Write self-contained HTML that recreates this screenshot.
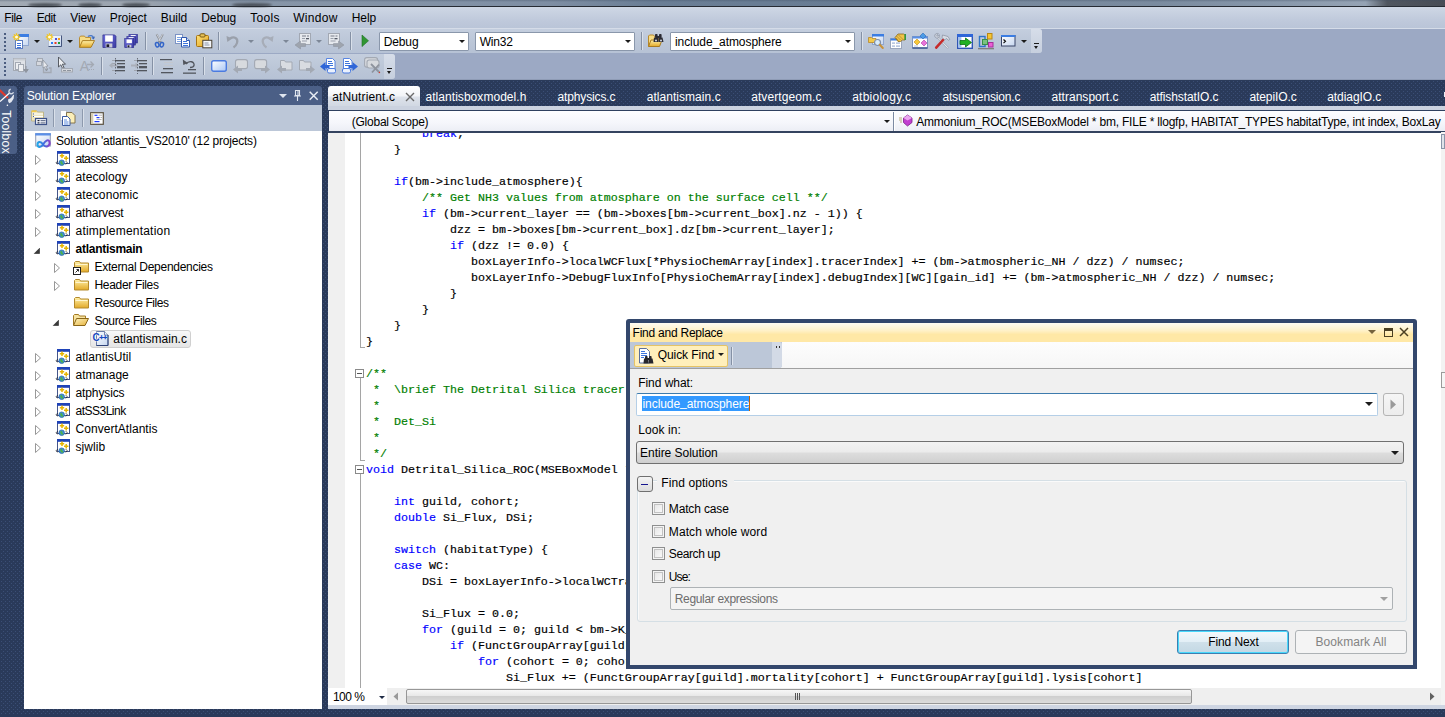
<!DOCTYPE html>
<html lang="en"><head><meta charset="utf-8"><title>atlantis_VS2010 - Microsoft Visual Studio</title>
<style>
html,body{margin:0;padding:0;}
body{width:1445px;height:717px;overflow:hidden;background:#2e3f61;font-family:"Liberation Sans",sans-serif;font-size:12px;color:#000;}
#root{position:relative;width:1445px;height:717px;overflow:hidden;
 background-color:#2a3a5a;
 background-image:radial-gradient(circle at 1.5px 1.5px,#3b4e75 0.55px,rgba(59,78,117,0) 0.85px),radial-gradient(circle at 3.5px 3.5px,#3b4e75 0.55px,rgba(59,78,117,0) 0.85px);
 background-size:4px 4px,4px 4px;background-position:0 0,0 0;}
.t{position:absolute;white-space:pre;line-height:16px;height:16px;}
.abs{position:absolute;}
.code{position:absolute;white-space:pre;font-family:"Liberation Mono",monospace;font-size:11.665px;line-height:16px;height:16px;color:#000;-webkit-text-stroke:0.18px;}
.kw{color:#0000ff;}
.cm{color:#008000;}
svg{position:absolute;overflow:visible;}
.sep{position:absolute;width:1px;background:#8591a5;box-shadow:1px 0 0 #d9e0ea;}
.combo{position:absolute;background:#fff;border:1px solid #8a97ab;box-sizing:border-box;border-radius:1px;}
.arr{position:absolute;width:0;height:0;border-left:3px solid transparent;border-right:3px solid transparent;border-top:3px solid #1b1b1b;}

</style></head>
<body>
<div id="root">
<div class="" style="position:absolute;left:0px;top:0px;width:1445px;height:9px;background:#cdd6e4;"></div>
<div class="" style="position:absolute;left:0px;top:0px;width:1445px;height:7px;background:linear-gradient(90deg,#a2aab4 0,#9aa3ae 10%,#8896a8 14%,#8292a6 30%,#7e8ea3 38%,#6a7e95 45%,#687c93 60%,#76889c 65%,#7a8b9f 80%,#8797aa 88%,#95a3b4 94.5%,#50565f 96%,#474c55 100%);"></div>
<div class="" style="position:absolute;left:0px;top:0px;width:1445px;height:2px;background:linear-gradient(rgba(60,75,95,.35),rgba(60,75,95,0));"></div>
<div class="" style="position:absolute;left:28px;top:2.5px;width:34px;height:4px;background:#41474f;border-radius:50%;filter:blur(1.2px);opacity:.85;"></div>
<div class="" style="position:absolute;left:78px;top:2.5px;width:24px;height:4px;background:#41474f;border-radius:50%;filter:blur(1.2px);opacity:.85;"></div>
<div class="" style="position:absolute;left:122px;top:2.5px;width:28px;height:4px;background:#41474f;border-radius:50%;filter:blur(1.2px);opacity:.85;"></div>
<div class="" style="position:absolute;left:232px;top:2.5px;width:40px;height:4px;background:#41474f;border-radius:50%;filter:blur(1.2px);opacity:.85;"></div>
<div class="" style="position:absolute;left:0px;top:6.3px;width:1445px;height:1.2px;background:#262b33;"></div>
<div class="" style="position:absolute;left:0px;top:7.5px;width:1445px;height:0.8px;background:#d4dbe6;"></div>
<div class="" style="position:absolute;left:0px;top:8px;width:1445px;height:21px;background:linear-gradient(#cdd6e4,#bfc9db 60%,#b9c4d7);"></div>
<span class="t " style="left:4.2px;top:10.0px;letter-spacing:-0.334px;">File</span>
<span class="t " style="left:36.7px;top:10.0px;letter-spacing:-0.419px;">Edit</span>
<span class="t " style="left:70.2px;top:10.0px;letter-spacing:-0.073px;">View</span>
<span class="t " style="left:109.7px;top:10.0px;letter-spacing:-0.050px;">Project</span>
<span class="t " style="left:160.7px;top:10.0px;letter-spacing:-0.037px;">Build</span>
<span class="t " style="left:201.2px;top:10.0px;letter-spacing:-0.072px;">Debug</span>
<span class="t " style="left:250.2px;top:10.0px;letter-spacing:0.297px;">Tools</span>
<span class="t " style="left:293.2px;top:10.0px;letter-spacing:0.303px;">Window</span>
<span class="t " style="left:351.7px;top:10.0px;letter-spacing:-0.045px;">Help</span>
<div class="" style="position:absolute;left:0px;top:29px;width:1445px;height:51px;background:#9ca9c4;"></div>
<div class="" style="position:absolute;left:0px;top:28px;width:1445px;height:1px;background:#d5dce8;"></div>
<div class="" style="position:absolute;left:0px;top:29px;width:1042px;height:24px;background:linear-gradient(#c4cede,#bcc7d8 50%,#b6c2d5);border-radius:0 3px 3px 0;"></div>
<div class="" style="position:absolute;left:1031px;top:29px;width:11px;height:24px;background:linear-gradient(#d6dde9,#c6cfde);border-radius:0 3px 3px 0;"></div>
<div class="" style="position:absolute;left:0px;top:54px;width:395px;height:25px;background:linear-gradient(#c4cede,#bcc7d8 50%,#b6c2d5);border-radius:0 3px 3px 0;"></div>
<div class="" style="position:absolute;left:384px;top:54px;width:11px;height:25px;background:linear-gradient(#d6dde9,#c6cfde);border-radius:0 3px 3px 0;"></div>
<div class="" style="position:absolute;left:0px;top:79px;width:1445px;height:1px;background:#8e9bb5;"></div>
<div class="" style="position:absolute;left:4px;top:33px;width:2px;height:2px;background:#4b5d7f;"></div>
<div class="" style="position:absolute;left:4px;top:37px;width:2px;height:2px;background:#4b5d7f;"></div>
<div class="" style="position:absolute;left:4px;top:41px;width:2px;height:2px;background:#4b5d7f;"></div>
<div class="" style="position:absolute;left:4px;top:45px;width:2px;height:2px;background:#4b5d7f;"></div>
<div class="" style="position:absolute;left:4px;top:49px;width:2px;height:2px;background:#4b5d7f;"></div>
<div class="" style="position:absolute;left:4px;top:58px;width:2px;height:2px;background:#4b5d7f;"></div>
<div class="" style="position:absolute;left:4px;top:62px;width:2px;height:2px;background:#4b5d7f;"></div>
<div class="" style="position:absolute;left:4px;top:66px;width:2px;height:2px;background:#4b5d7f;"></div>
<div class="" style="position:absolute;left:4px;top:70px;width:2px;height:2px;background:#4b5d7f;"></div>
<div class="" style="position:absolute;left:4px;top:74px;width:2px;height:2px;background:#4b5d7f;"></div>
<div class="sep" style="left:145px;top:32px;height:18px"></div>
<div class="sep" style="left:218px;top:32px;height:18px"></div>
<div class="sep" style="left:350px;top:32px;height:18px"></div>
<div class="sep" style="left:641px;top:32px;height:18px"></div>
<div class="sep" style="left:861px;top:32px;height:18px"></div>
<div class="sep" style="left:101px;top:57px;height:18px"></div>
<div class="sep" style="left:152px;top:57px;height:18px"></div>
<div class="sep" style="left:203px;top:57px;height:18px"></div>
<div class="arr" style="left:34px;top:39.5px;border-top-color:#1b1b1b"></div>
<div class="arr" style="left:67px;top:39.5px;border-top-color:#1b1b1b"></div>
<div class="arr" style="left:248px;top:39.5px;border-top-color:#7d8797"></div>
<div class="arr" style="left:283px;top:39.5px;border-top-color:#7d8797"></div>
<div class="arr" style="left:316px;top:39.5px;border-top-color:#7d8797"></div>
<div class="arr" style="left:1021px;top:39.5px;border-top-color:#1b1b1b"></div>
<div class="" style="position:absolute;left:1034px;top:43px;width:5px;height:1px;background:#1b1b1b;"></div>
<div class="arr" style="left:1034px;top:46px;border-width:3px 2.5px 0 2.5px"></div>
<div class="" style="position:absolute;left:387px;top:68px;width:5px;height:1px;background:#1b1b1b;"></div>
<div class="arr" style="left:387px;top:71px;border-width:3px 2.5px 0 2.5px"></div>
<div class="combo" style="left:379px;top:31.5px;width:90px;height:19px"></div>
<div class="combo" style="left:475px;top:31.5px;width:160px;height:19px"></div>
<div class="combo" style="left:670px;top:31.5px;width:185px;height:19px"></div>
<span class="t " style="left:383.8px;top:34.0px;letter-spacing:-0.152px;">Debug</span>
<span class="t " style="left:479.7px;top:34.0px;letter-spacing:-0.223px;">Win32</span>
<span class="t " style="left:675.0px;top:34.0px;letter-spacing:-0.076px;">include_atmosphere</span>
<div class="arr" style="left:459px;top:40px"></div>
<div class="arr" style="left:625px;top:40px"></div>
<div class="arr" style="left:845px;top:40px"></div>
<svg width="0" height="0" style="left:0;top:0"><defs>
<linearGradient id="gFold" x1="0" y1="0" x2="0" y2="1"><stop offset="0" stop-color="#fff0a8"/><stop offset="1" stop-color="#e2a928"/></linearGradient>
<linearGradient id="gFold2" x1="0" y1="0" x2="1" y2="1"><stop offset="0" stop-color="#fdf3c0"/><stop offset="1" stop-color="#e6b13a"/></linearGradient>
<linearGradient id="gWin" x1="0" y1="0" x2="1" y2="1"><stop offset="0" stop-color="#ffffff"/><stop offset="1" stop-color="#c5d6f0"/></linearGradient>
<linearGradient id="gGray" x1="0" y1="0" x2="0" y2="1"><stop offset="0" stop-color="#d8dce3"/><stop offset="1" stop-color="#aeb4be"/></linearGradient>
<linearGradient id="gBlue" x1="0" y1="0" x2="1" y2="1"><stop offset="0" stop-color="#ffffff"/><stop offset="1" stop-color="#a9c6f5"/></linearGradient>
<linearGradient id="gFlop" x1="0" y1="0" x2="1" y2="1"><stop offset="0" stop-color="#6d6ddc"/><stop offset="1" stop-color="#3c3ca4"/></linearGradient>
<linearGradient id="gClip" x1="0" y1="0" x2="1" y2="1"><stop offset="0" stop-color="#ffe27a"/><stop offset="1" stop-color="#e0a21c"/></linearGradient>
<linearGradient id="gInf" x1="0" y1="0" x2="1" y2="0"><stop offset="0" stop-color="#24a8e8"/><stop offset="0.5" stop-color="#3b6fe0"/><stop offset="1" stop-color="#8a3fc8"/></linearGradient>
</defs></svg>
<svg style="left:13px;top:33px" width="16" height="16" viewBox="0 0 16 16"><rect x="5.5" y="1.5" width="10" height="11" fill="url(#gWin)" stroke="#8fa6cf"/><rect x="5" y="1" width="11" height="3" fill="#3b7de2"/><rect x="2.5" y="7.5" width="7" height="8" fill="#fff" stroke="#5b7cc0" stroke-width="1"/><rect x="4" y="10" width="4" height="1" fill="#3d74dc"/><rect x="4" y="12" width="4" height="1" fill="#3d74dc"/><rect x="4" y="14" width="4" height="1" fill="#3d74dc"/><g stroke="#f3c316" stroke-width="1.3"><path d="M3.5 0.3v7.4M-0.2 4h7.4M0.9 1.4l5.2 5.2M6.1 1.4l-5.2 5.2"/></g><circle cx="3.5" cy="4" r="1.5" fill="#fffbe0"/></svg>
<svg style="left:46px;top:33px" width="16" height="16" viewBox="0 0 16 16"><rect x="2.5" y="2.5" width="13" height="11" fill="url(#gWin)" stroke="#b4bfd3"/><path d="M2.5 13.5h13v-11" fill="none" stroke="#44547c"/><rect x="9" y="5" width="2" height="2" fill="#5050d8"/><rect x="12" y="5" width="2" height="2" fill="#f59a1c"/><rect x="5" y="9" width="2" height="2" fill="#2a7df0"/><rect x="8.5" y="9" width="2" height="2" fill="#e83a24"/><rect x="12" y="9" width="2" height="2" fill="#1f9a2e"/><g stroke="#f3c316" stroke-width="1.3"><path d="M3.5 0.3v7.4M-0.2 4h7.4M0.9 1.4l5.2 5.2M6.1 1.4l-5.2 5.2"/></g><circle cx="3.5" cy="4" r="1.5" fill="#fffbe0"/></svg>
<svg style="left:79px;top:33px" width="16" height="16" viewBox="0 0 16 16"><g transform="translate(0,1.3) scale(1,0.9)"><path d="M0.5 14.5V3.5l1-1.5h4l1 1.5h5v3" fill="#f7dc86" stroke="#b8892a"/><path d="M0.5 14.5L3.5 7h12l-3.5 7.5z" fill="url(#gFold)" stroke="#a87a1e"/><path d="M9 2.5c2.2-2 5-1.2 5.6 1.6" fill="none" stroke="#4a78c8" stroke-width="1.3"/><path d="M16 2.5l-1.2 3.4-2.6-2z" fill="#3c68b8"/></g></svg>
<svg style="left:102px;top:33px" width="16" height="16" viewBox="0 0 16 16"><g transform="translate(0,1) scale(0.9)"><path d="M1 1h13l1.5 1.500V15H1z" fill="url(#gFlop)" stroke="#2e2e8c" stroke-width="0.8"/><rect x="3.500" y="1.500" width="8.500" height="7" fill="#fff"/><rect x="4" y="10.500" width="7.500" height="4.500" fill="#c9cbd6"/><rect x="5" y="11.500" width="3" height="3" fill="#1a1a2a"/></g></svg>
<svg style="left:124px;top:33px" width="16" height="16" viewBox="0 0 16 16"><g transform="translate(0,1) scale(0.9)"><rect x="5.500" y="0.500" width="9.500" height="9.500" fill="url(#gFlop)" stroke="#2e2e8c" stroke-width="0.700"/><rect x="7.500" y="1.200" width="5.500" height="1.500" fill="#fff"/><rect x="3.200" y="2.800" width="9.500" height="9.500" fill="url(#gFlop)" stroke="#2e2e8c" stroke-width="0.700"/><rect x="5.200" y="3.500" width="5.500" height="1.500" fill="#fff"/><rect x="0.800" y="5.200" width="10" height="10" fill="url(#gFlop)" stroke="#2e2e8c" stroke-width="0.700"/><rect x="2.800" y="6" width="6" height="4.200" fill="#fff"/><rect x="3.200" y="12" width="5" height="3" fill="#c9cbd6"/><rect x="4" y="12.600" width="2" height="2.200" fill="#1a1a2a"/></g></svg>
<svg style="left:153px;top:33px" width="16" height="16" viewBox="0 0 16 16"><path d="M3.6 1.300L8 9.500M9.900 1.300L5.500 9.500" stroke="#8c9098" stroke-width="1.900" fill="none"/><path d="M3.900 1.300L7.500 8M9.600 1.300L6 8" stroke="#e6e9ef" stroke-width="0.700" fill="none"/><ellipse cx="4.200" cy="11.700" rx="1.700" ry="2.300" fill="none" stroke="#3264c8" stroke-width="1.500" transform="rotate(-15 4.200 11.700)"/><ellipse cx="8.800" cy="11.700" rx="1.700" ry="2.300" fill="none" stroke="#3264c8" stroke-width="1.500" transform="rotate(15 8.800 11.700)"/></svg>
<svg style="left:174px;top:33px" width="16" height="16" viewBox="0 0 16 16"><rect x="1.5" y="1.5" width="7" height="9" fill="#fff" stroke="#7c93c4" stroke-width="1"/><rect x="3" y="4" width="4" height="1" fill="#7aa2e6"/><rect x="3" y="6" width="4" height="1" fill="#7aa2e6"/><rect x="3" y="8" width="4" height="1" fill="#7aa2e6"/><path d="M7.500 4.500h5l3 3v6.500h-8z" fill="#fff" stroke="#2f58b0"/><path d="M12.500 4.500v3h3" fill="#cfe0f8" stroke="#2f58b0"/><rect x="9" y="8" width="4" height="1" fill="#3d74dc"/><rect x="9" y="10" width="5" height="1" fill="#3d74dc"/><rect x="9" y="12" width="5" height="1" fill="#3d74dc"/></svg>
<svg style="left:196px;top:33px" width="16" height="16" viewBox="0 0 16 16"><rect x="0.500" y="2.500" width="12" height="11" rx="1" fill="url(#gClip)" stroke="#a87412"/><rect x="4" y="0.800" width="5" height="3.200" rx="1" fill="#e8c35a" stroke="#7a5a14"/><rect x="6.800" y="7.300" width="9" height="7.500" fill="#f4f6fa" stroke="#4a4336"/><rect x="8.500" y="9.500" width="4" height="1" fill="#8a93a8"/><rect x="8.500" y="11.500" width="5" height="1" fill="#8a93a8"/></svg>
<svg style="left:226px;top:33px" width="16" height="16" viewBox="0 0 16 16"><path d="M4 5.500c4-2.500 8.500-0.500 7 4.500-0.600 2-2 3.500-3.500 4.500" fill="none" stroke="#9aa0ab" stroke-width="2.200"/><path d="M0.500 3l0.800 6 5-3.500z" fill="#9aa0ab"/></svg>
<svg style="left:258px;top:33px" width="16" height="16" viewBox="0 0 16 16"><path d="M12 5.500c-4-2.500-8.500-0.500-7 4.500 0.600 2 2 3.500 3.500 4.500" fill="none" stroke="#a7adb8" stroke-width="2.200"/><path d="M15.500 3l-0.800 6-5-3.500z" fill="#a7adb8"/></svg>
<svg style="left:295px;top:33px" width="16" height="16" viewBox="0 0 16 16"><rect x="4.500" y="0.500" width="11" height="11" fill="#e6e9ee" stroke="#a2a8b3"/><rect x="7" y="2.500" width="4" height="1" fill="#777d88"/><rect x="12" y="2.500" width="2" height="1" fill="#777d88"/><rect x="7" y="5" width="3" height="1" fill="#9aa0ab"/><rect x="11" y="5" width="3" height="1.300" fill="#555b66"/><rect x="7" y="7.500" width="5" height="1" fill="#9aa0ab"/><path d="M0 12l5.500-4v2.500h5v3h-5V16z" fill="#9ea4ae" stroke="#8b919c" stroke-width="0.500"/></svg>
<svg style="left:328px;top:33px" width="16" height="16" viewBox="0 0 16 16"><rect x="0.500" y="0.500" width="11" height="11" fill="#e6e9ee" stroke="#a2a8b3"/><rect x="2.500" y="2.500" width="4" height="1" fill="#777d88"/><rect x="7.500" y="2.500" width="2" height="1" fill="#777d88"/><rect x="2.500" y="5" width="3" height="1" fill="#9aa0ab"/><rect x="6.500" y="5" width="3" height="1.300" fill="#555b66"/><rect x="2.500" y="7.500" width="5" height="1" fill="#9aa0ab"/><path d="M16 12l-5.500-4v2.500h-5v3h5V16z" fill="#9ea4ae" stroke="#8b919c" stroke-width="0.500"/></svg>
<svg style="left:648px;top:33px" width="16" height="16" viewBox="0 0 16 16"><path d="M0.500 13.500V3l1-1h4l1 1.500h4v3" fill="#f7dc86" stroke="#b8892a"/><path d="M0.500 13.500L3 7h11l-2.500 6.500z" fill="url(#gFold)" stroke="#a87a1e"/><g fill="#2b2b33"><rect x="7" y="1" width="2.600" height="4" rx="0.800"/><rect x="11" y="1" width="2.600" height="4" rx="0.800"/><path d="M6 4.500h4l0.500 4.500h-5z"/><path d="M10.500 4.500h4l1 4.500h-5z"/><rect x="9" y="3" width="2.500" height="2"/></g><circle cx="8" cy="7.500" r="1" fill="#d6dbe6"/><circle cx="13" cy="7.500" r="1" fill="#d6dbe6"/></svg>
<svg style="left:868px;top:33px" width="16" height="16" viewBox="0 0 16 16"><rect x="4.500" y="1.500" width="11" height="10" fill="url(#gWin)" stroke="#8fa6cf"/><rect x="4" y="1" width="12" height="2.500" fill="#3b7de2"/><path d="M0.500 9.500v-5h3l1 1h3.500v4z" fill="#f3c94a" stroke="#b8892a" stroke-width="0.800"/><circle cx="9.500" cy="9.500" r="3" fill="#d9ecfb" stroke="#7f8ea8" stroke-width="1.200"/><path d="M11.800 11.800l3 3.200" stroke="#c8923a" stroke-width="2" stroke-linecap="round"/></svg>
<svg style="left:890px;top:33px" width="16" height="16" viewBox="0 0 16 16"><rect x="0.500" y="5.500" width="11" height="10" fill="#fff" stroke="#9aa6bd"/><rect x="0.500" y="5.500" width="11" height="2" fill="#3b7de2"/><rect x="2" y="9.500" width="3" height="1.200" fill="#9db1d6"/><rect x="6" y="9.500" width="4" height="1.200" fill="#9db1d6"/><rect x="2" y="12.500" width="3" height="1.200" fill="#9db1d6"/><rect x="6" y="12.500" width="4" height="1.200" fill="#9db1d6"/><path d="M5 4.500l3-3.500h5.500l1.500 1v5h-2.500l-2 1.500h-2.500l-1-1.500z" fill="#efc24a" stroke="#8a6a1a" stroke-width="0.800"/><rect x="14.500" y="1" width="1.500" height="6" fill="#2f9a44"/><path d="M6.500 3l4 4M8.500 2l4 4M6 5l2.500 2.500" stroke="#8a6a1a" stroke-width="0.500"/></svg>
<svg style="left:912px;top:33px" width="16" height="16" viewBox="0 0 16 16"><rect x="0.500" y="3.500" width="15" height="11.500" fill="#fff" stroke="#7f94bd"/><rect x="0.500" y="3.500" width="15" height="2" fill="#5a8fe6"/><path d="M0.500 15h15" stroke="#2e4a86" stroke-width="1.300"/><path d="M11 0l3 3-3 3-3-3z" fill="#4d9be6" stroke="#2a6cb8" stroke-width="0.600"/><path d="M5 6l3 3-3 3-3-3z" fill="#f8c83a" stroke="#c08a18" stroke-width="0.600"/><path d="M12 7l3 3-3 3-3-3z" fill="#e873d8" stroke="#b03aa6" stroke-width="0.600"/><rect x="2" y="12.500" width="4" height="1" fill="#b5c3dd"/></svg>
<svg style="left:934px;top:33px" width="16" height="16" viewBox="0 0 16 16"><path d="M2 2.500L13.500 14.500" stroke="#a9b0bd" stroke-width="2.400" stroke-linecap="round"/><path d="M2 2.500L13.500 14.500" stroke="#e9edf3" stroke-width="0.900" stroke-linecap="round"/><path d="M0.800 3.800a2.600 2.600 0 0 1 3.600-3.200l-1.600 1.700 0.800 0.900 1.800-1.500a2.600 2.600 0 0 1-3 3.400z" fill="#c6ccd8" stroke="#7c8494" stroke-width="0.500"/><path d="M9.500 6.500L2.200 14.600" stroke="#c62a2a" stroke-width="2.600" stroke-linecap="round"/><path d="M8.500 2l5.500 1.500 1.800 3-1.600 0.800-1.800-2-1.700 1.700-2.600-2.600z" fill="#d7dbe4" stroke="#7c8494" stroke-width="0.600"/></svg>
<svg style="left:956.5px;top:33px" width="16" height="16" viewBox="0 0 16 16"><rect x="0.700" y="1.700" width="14.600" height="13.600" fill="#fff" stroke="#2f55b5" stroke-width="1.400"/><rect x="0" y="1" width="16" height="3" fill="#2f66d8"/><rect x="1.400" y="4" width="3" height="10.600" fill="#9fc0f2"/><path d="M3 7.500h5.500V5l6 4.500-6 4.500v-2.500H3z" fill="#22b122" stroke="#0f6e14" stroke-width="0.800"/></svg>
<svg style="left:978px;top:33px" width="16" height="16" viewBox="0 0 16 16"><rect x="1.500" y="3.500" width="5.500" height="10" fill="none" stroke="#2f74c8" stroke-width="1.400"/><rect x="4.500" y="6.500" width="5" height="5" fill="#79c47e" stroke="#3a8f48"/><rect x="9.500" y="0.500" width="4.500" height="5.500" fill="#f6c531" stroke="#b98714"/><rect x="10.500" y="9.500" width="4.500" height="4.500" fill="#ea5fd6" stroke="#a72f9a"/><rect x="0" y="15" width="16" height="1.300" fill="#7f7f7f"/></svg>
<svg style="left:362px;top:35px" width="7" height="12" viewBox="0 0 7 12"><path d="M0 0L6.500 5.800L0 11.600z" fill="#2f9632" stroke="#1d6e22" stroke-width="0.600"/></svg>
<svg style="left:1001px;top:35px" width="15" height="12" viewBox="0 0 15 12"><rect x="0.500" y="0.500" width="13.500" height="10.500" fill="url(#gWin)" stroke="#3a4668" stroke-width="1"/><rect x="0" y="0" width="14.500" height="2" fill="#3b7de2"/><path d="M2.500 4.500l2 1.800-2 1.800" fill="none" stroke="#111" stroke-width="1.200"/></svg>
<svg style="left:13px;top:57.5px" width="16" height="16" viewBox="0 0 16 16"><rect x="0.500" y="0.500" width="12" height="12" fill="#dfe2e7" stroke="#a3a9b3"/><rect x="0.500" y="0.500" width="12" height="2" fill="#c9cdd4"/><rect x="2.500" y="4.500" width="5" height="7" fill="#eceef1" stroke="#a3a9b3"/><rect x="5.500" y="6.500" width="5" height="7" fill="#eceef1" stroke="#a3a9b3"/><path d="M13 8v5M10.800 11.500l2.200 3 2.200-3z" stroke="#8e949e" fill="#8e949e"/></svg>
<svg style="left:35.5px;top:57.5px" width="16" height="16" viewBox="0 0 16 16"><rect x="1.500" y="0.500" width="5" height="4" fill="#d5d8de" stroke="#a3a9b3"/><rect x="0.500" y="3.500" width="5" height="4" fill="#d5d8de" stroke="#a3a9b3"/><path d="M7 2l5 6-2.300 0.300 1.500 3-1.300 0.600-1.500-3L7 10z" fill="#e8eaee" stroke="#8e949e" stroke-width="0.800"/><path d="M7.500 10v4.500h7.500v-4.500h-2" fill="none" stroke="#a3a9b3" stroke-width="1.300"/><path d="M9.500 11.500l1 1.500 1.200-2.500" fill="none" stroke="#8e949e"/></svg>
<svg style="left:58px;top:56.5px" width="16" height="16" viewBox="0 0 16 16"><path d="M0.500 0v10l2.300-2.200 1.800 3.600 1.500-0.700-1.800-3.500h3.200z" fill="#eef0f3" stroke="#4a4e56" stroke-width="0.900"/><rect x="3.500" y="11.500" width="11" height="3.500" fill="#d5d8de" stroke="#a3a9b3"/><rect x="5" y="13" width="3" height="1" fill="#8e949e"/><rect x="9" y="13" width="4" height="1" fill="#8e949e"/></svg>
<svg style="left:108.5px;top:57.5px" width="16" height="16" viewBox="0 0 16 16"><g fill="#52565e"><rect x="6" y="2" width="10" height="1.300"/><rect x="8" y="5" width="8" height="1.300"/><rect x="8" y="8" width="8" height="2.300"/><rect x="6" y="12" width="10" height="1.300"/></g><g fill="#9fa4ae"><rect x="3" y="5" width="4" height="1"/><rect x="3" y="12" width="3" height="1"/><rect x="3" y="2" width="3" height="1"/></g><path d="M0 7.500l3.500-3v2h5v2h-5v2z" fill="#a9aeb8"/><path d="M6.500 0v16" stroke="#52565e" stroke-width="0.800" stroke-dasharray="1.500 1.500"/></svg>
<svg style="left:130.5px;top:57.5px" width="16" height="16" viewBox="0 0 16 16"><g fill="#52565e"><rect x="6" y="2" width="10" height="1.300"/><rect x="8" y="5" width="8" height="1.300"/><rect x="8" y="8" width="8" height="2.300"/><rect x="6" y="12" width="10" height="1.300"/></g><g fill="#9fa4ae"><rect x="3" y="12" width="3" height="1"/><rect x="3" y="2" width="3" height="1"/></g><path d="M8 7.500l-3.500-3v2h-4.500v2h4.500v2z" fill="#a9aeb8"/><path d="M6.500 0v16" stroke="#52565e" stroke-width="0.800" stroke-dasharray="1.500 1.500"/></svg>
<svg style="left:160px;top:57.5px" width="16" height="16" viewBox="0 0 16 16"><g fill="#52565e"><rect x="0" y="1" width="12" height="1.200"/><rect x="3" y="10" width="10" height="1.300"/><rect x="1" y="14" width="12" height="1.300"/></g><g fill="#c3c7ce"><rect x="4" y="4" width="9" height="1"/><rect x="4" y="7" width="9" height="1"/></g></svg>
<svg style="left:182px;top:57.5px" width="16" height="16" viewBox="0 0 16 16"><path d="M4 6c3-4 9-2.500 8 1.500-0.400 1.500-2 2-4 2" fill="none" stroke="#52565e" stroke-width="1.300"/><path d="M0.800 1.500l0.500 5.500 4.700-2z" fill="#52565e"/><g fill="#52565e"><rect x="6" y="11" width="8" height="1.300"/><rect x="1" y="14.500" width="13" height="1.300"/></g></svg>
<svg style="left:210.5px;top:59.5px" width="16" height="16" viewBox="0 0 16 16"><rect x="0.700" y="0.700" width="14.600" height="10.600" rx="2" fill="url(#gBlue)" stroke="#4b7be0" stroke-width="1.400"/></svg>
<svg style="left:232.5px;top:58.5px" width="16" height="16" viewBox="0 0 16 16"><rect x="2.5" y="0.600" width="12" height="9" rx="2.200" fill="#d7dade" stroke="#a3a9b3" stroke-width="1.100"/><path d="M0 10.500l5-4v2.500h4v3h-4v2.500z" fill="#a3a9b3"/></svg>
<svg style="left:254px;top:58.5px" width="16" height="16" viewBox="0 0 16 16"><rect x="0.6" y="0.600" width="12" height="9" rx="2.200" fill="#d7dade" stroke="#a3a9b3" stroke-width="1.100"/><path d="M16 10.500l-5-4v2.500h-4v3h4v2.500z" fill="#a3a9b3"/></svg>
<svg style="left:277px;top:58.5px" width="16" height="16" viewBox="0 0 16 16"><path d="M3.500 11V1.500h4l1 1.500h6.500v8z" fill="#d9dce1" stroke="#a3a9b3"/><path d="M0 10.500l5-4v2.500h4v3h-4v2.500z" fill="#a3a9b3"/></svg>
<svg style="left:299px;top:58.5px" width="16" height="16" viewBox="0 0 16 16"><path d="M0.500 11V1.500h4l1 1.500h6.500v8z" fill="#d9dce1" stroke="#a3a9b3"/><path d="M16 10.500l-5-4v2.500h-4v3h4v2.500z" fill="#a3a9b3"/></svg>
<svg style="left:320px;top:57.5px" width="16" height="16" viewBox="0 0 16 16"><path d="M6.500 0.500h6l2.500 2.500v8h-8.500z" fill="#fff" stroke="#4b7be0" stroke-width="0.900"/><rect x="8" y="3" width="4" height="1" fill="#3d74dc"/><rect x="8" y="5" width="5" height="1" fill="#3d74dc"/><rect x="8" y="7" width="5" height="1" fill="#3d74dc"/><path d="M0 8.500l5.500-4.500v3h4v3h-4v3z" fill="#2f66d8"/><rect x="7.500" y="10.500" width="8" height="4.500" rx="1.500" fill="#eaf1fd" stroke="#4b7be0"/></svg>
<svg style="left:342px;top:57.5px" width="16" height="16" viewBox="0 0 16 16"><path d="M1.500 0.500h6l2.500 2.500v8h-8.500z" fill="#fff" stroke="#4b7be0" stroke-width="0.900"/><rect x="3" y="3" width="4" height="1" fill="#3d74dc"/><rect x="3" y="5" width="5" height="1" fill="#3d74dc"/><rect x="3" y="7" width="5" height="1" fill="#3d74dc"/><path d="M16 8.500l-5.500-4.500v3h-4v3h4v3z" fill="#2f66d8"/><rect x="0.500" y="10.500" width="8" height="4.500" rx="1.500" fill="#eaf1fd" stroke="#4b7be0"/></svg>
<svg style="left:364px;top:56.5px" width="16" height="16" viewBox="0 0 16 16"><rect x="0.600" y="0.600" width="13" height="9.500" rx="2.200" fill="#d7dade" stroke="#a3a9b3" stroke-width="1.100"/><rect x="3" y="3" width="12" height="8" rx="2.200" fill="#d7dade" stroke="#a3a9b3" stroke-width="1.100"/><path d="M7 7l8.500 8.500M15 7.500l-7 8" stroke="#8e949e" stroke-width="1.800"/><circle cx="15.500" cy="15.500" r="0.700" fill="#e03a2a"/></svg>
<span class="t " style="left:79.8px;top:58.0px;letter-spacing:1.562px;font-size:14px;color:#a3a9b3;font-family:"Liberation Serif",serif;letter-spacing:0;">A</span>
<svg style="left:86.5px;top:60px" width="8" height="11" viewBox="0 0 8 11"><path d="M0 4.500h6M3.500 1.500l3 3-3 3" fill="none" stroke="#a3a9b3" stroke-width="1.300"/><path d="M0 9.500h7" stroke="#a3a9b3" stroke-dasharray="1 1"/></svg>
<div class="" style="position:absolute;left:0px;top:714.5px;width:1445px;height:3px;background:#2a3a5a;"></div>
<div class="" style="position:absolute;left:0px;top:86px;width:17px;height:68px;background:#4b5f86;border-radius:0 3px 3px 0;"></div>
<span class="t" style="left:-19.3px;top:123.5px;width:50px;color:#fff;transform:rotate(90deg);transform-origin:center;text-align:center;letter-spacing:0.3px">Toolbox</span>
<div class="" style="position:absolute;left:24px;top:86px;width:298px;height:19px;background:#4b5f86;border-radius:3px 3px 0 0;"></div>
<span class="t " style="left:26.7px;top:88.0px;letter-spacing:-0.146px;color:#fff;">Solution Explorer</span>
<div class="arr" style="left:279px;top:94px;border-width:4px 4px 0 4px;border-top-color:#dfe5ef"></div>
<div class="" style="position:absolute;left:24px;top:105px;width:298px;height:26px;background:#bcc7d8;"></div>
<div class="" style="position:absolute;left:24px;top:131px;width:298px;height:578px;background:#fff;"></div>
<div class="sep" style="left:53px;top:109px;height:18px;background:#8d99ad"></div>
<div class="sep" style="left:82px;top:109px;height:18px;background:#8d99ad"></div>
<div class="" style="position:absolute;left:90px;top:330px;width:101px;height:18px;background:linear-gradient(#f8f8f8,#e5e5e5);border:1px solid #d0d0d0;border-radius:3px;box-sizing:border-box;"></div>
<span class="t " style="left:56.0px;top:133.0px;letter-spacing:-0.200px;">Solution 'atlantis_VS2010' (12 projects)</span>
<svg style="left:35px;top:133px" width="16" height="16" viewBox="0 0 16 16"><rect x="0.700" y="0.700" width="14.600" height="12.300" fill="url(#gWin)" stroke="#8f9ab3" stroke-width="1"/><rect x="0.200" y="0.200" width="15.600" height="2.300" fill="#5a8fe8"/><path d="M8 11.500c-2-3.500-5.500-3-5.500 0s3.500 3.500 5.500 0 5.500-6 6.500-2.500-3.500 6.500-6.500 2.500z" fill="none" stroke="url(#gInf)" stroke-width="2"/></svg>
<span class="t " style="left:75.5px;top:151.0px;letter-spacing:-0.694px;">atassess</span>
<svg style="left:35px;top:155px" width="7" height="10" viewBox="0 0 7 10"><path d="M0.5 0.5 L5.5 5 L0.5 9.5 Z" fill="#fff" stroke="#989898" stroke-width="1"/></svg>
<svg style="left:54.7px;top:150.7px" width="15" height="15" viewBox="0 0 15 15"><rect x="2.500" y="0.500" width="12" height="12" fill="#fff" stroke="#44558a" stroke-width="1"/><rect x="2" y="0" width="13" height="2.800" fill="#1f43b8"/><path d="M7 2.500v4.500M4.800 4.800h4.400M11.200 5v4.500M9 7.200h4.400" stroke="#e6b400" stroke-width="1.500"/><circle cx="6.700" cy="11.700" r="2.800" fill="#3f8fd8" stroke="#1f5d9a" stroke-width="0.600"/><path d="M5.100 10.800c1-1.500 2.500-1 2.200 0.300s1.500 0.800 1 2.200c-1 1-3 0.500-3.200-2.500z" fill="#4fb04a"/><path d="M2.600 10.200l-1.500 1.600 1.500 1.600M10.800 10.200l1.500 1.600-1.500 1.600" fill="none" stroke="#222" stroke-width="0.800"/></svg>
<span class="t " style="left:75.5px;top:169.0px;letter-spacing:0.092px;">atecology</span>
<svg style="left:35px;top:173px" width="7" height="10" viewBox="0 0 7 10"><path d="M0.5 0.5 L5.5 5 L0.5 9.5 Z" fill="#fff" stroke="#989898" stroke-width="1"/></svg>
<svg style="left:54.7px;top:168.7px" width="15" height="15" viewBox="0 0 15 15"><rect x="2.500" y="0.500" width="12" height="12" fill="#fff" stroke="#44558a" stroke-width="1"/><rect x="2" y="0" width="13" height="2.800" fill="#1f43b8"/><path d="M7 2.500v4.500M4.800 4.800h4.400M11.200 5v4.500M9 7.200h4.400" stroke="#e6b400" stroke-width="1.500"/><circle cx="6.700" cy="11.700" r="2.800" fill="#3f8fd8" stroke="#1f5d9a" stroke-width="0.600"/><path d="M5.100 10.800c1-1.500 2.500-1 2.200 0.300s1.500 0.800 1 2.200c-1 1-3 0.500-3.200-2.500z" fill="#4fb04a"/><path d="M2.600 10.200l-1.500 1.600 1.500 1.600M10.800 10.200l1.500 1.600-1.500 1.600" fill="none" stroke="#222" stroke-width="0.800"/></svg>
<span class="t " style="left:75.5px;top:187.0px;letter-spacing:0.163px;">ateconomic</span>
<svg style="left:35px;top:191px" width="7" height="10" viewBox="0 0 7 10"><path d="M0.5 0.5 L5.5 5 L0.5 9.5 Z" fill="#fff" stroke="#989898" stroke-width="1"/></svg>
<svg style="left:54.7px;top:186.7px" width="15" height="15" viewBox="0 0 15 15"><rect x="2.500" y="0.500" width="12" height="12" fill="#fff" stroke="#44558a" stroke-width="1"/><rect x="2" y="0" width="13" height="2.800" fill="#1f43b8"/><path d="M7 2.500v4.500M4.800 4.800h4.400M11.200 5v4.500M9 7.200h4.400" stroke="#e6b400" stroke-width="1.500"/><circle cx="6.700" cy="11.700" r="2.800" fill="#3f8fd8" stroke="#1f5d9a" stroke-width="0.600"/><path d="M5.100 10.800c1-1.500 2.500-1 2.200 0.300s1.500 0.800 1 2.200c-1 1-3 0.500-3.200-2.500z" fill="#4fb04a"/><path d="M2.600 10.200l-1.500 1.600 1.500 1.600M10.800 10.200l1.500 1.600-1.500 1.600" fill="none" stroke="#222" stroke-width="0.800"/></svg>
<span class="t " style="left:75.5px;top:205.0px;letter-spacing:-0.162px;">atharvest</span>
<svg style="left:35px;top:209px" width="7" height="10" viewBox="0 0 7 10"><path d="M0.5 0.5 L5.5 5 L0.5 9.5 Z" fill="#fff" stroke="#989898" stroke-width="1"/></svg>
<svg style="left:54.7px;top:204.7px" width="15" height="15" viewBox="0 0 15 15"><rect x="2.500" y="0.500" width="12" height="12" fill="#fff" stroke="#44558a" stroke-width="1"/><rect x="2" y="0" width="13" height="2.800" fill="#1f43b8"/><path d="M7 2.500v4.500M4.800 4.800h4.400M11.200 5v4.500M9 7.200h4.400" stroke="#e6b400" stroke-width="1.500"/><circle cx="6.700" cy="11.700" r="2.800" fill="#3f8fd8" stroke="#1f5d9a" stroke-width="0.600"/><path d="M5.100 10.800c1-1.500 2.500-1 2.200 0.300s1.500 0.800 1 2.200c-1 1-3 0.500-3.200-2.500z" fill="#4fb04a"/><path d="M2.600 10.200l-1.500 1.600 1.500 1.600M10.800 10.200l1.500 1.600-1.500 1.600" fill="none" stroke="#222" stroke-width="0.800"/></svg>
<span class="t " style="left:75.5px;top:223.0px;letter-spacing:0.214px;">atimplementation</span>
<svg style="left:35px;top:227px" width="7" height="10" viewBox="0 0 7 10"><path d="M0.5 0.5 L5.5 5 L0.5 9.5 Z" fill="#fff" stroke="#989898" stroke-width="1"/></svg>
<svg style="left:54.7px;top:222.7px" width="15" height="15" viewBox="0 0 15 15"><rect x="2.500" y="0.500" width="12" height="12" fill="#fff" stroke="#44558a" stroke-width="1"/><rect x="2" y="0" width="13" height="2.800" fill="#1f43b8"/><path d="M7 2.500v4.500M4.800 4.800h4.400M11.200 5v4.500M9 7.200h4.400" stroke="#e6b400" stroke-width="1.500"/><circle cx="6.700" cy="11.700" r="2.800" fill="#3f8fd8" stroke="#1f5d9a" stroke-width="0.600"/><path d="M5.100 10.800c1-1.500 2.500-1 2.200 0.300s1.500 0.800 1 2.200c-1 1-3 0.500-3.200-2.500z" fill="#4fb04a"/><path d="M2.600 10.200l-1.500 1.600 1.500 1.600M10.800 10.200l1.500 1.600-1.500 1.600" fill="none" stroke="#222" stroke-width="0.800"/></svg>
<span class="t " style="left:75.5px;top:241.0px;letter-spacing:-0.260px;font-weight:bold;">atlantismain</span>
<svg style="left:34px;top:247.5px" width="6" height="6" viewBox="0 0 6 6"><path d="M5.500 0.300 L5.500 5.500 L0.300 5.500 Z" fill="#3a3a3a" stroke="#262626" stroke-width="0.600"/></svg>
<svg style="left:54.7px;top:240.7px" width="15" height="15" viewBox="0 0 15 15"><rect x="2.500" y="0.500" width="12" height="12" fill="#fff" stroke="#44558a" stroke-width="1"/><rect x="2" y="0" width="13" height="2.800" fill="#1f43b8"/><path d="M7 2.500v4.500M4.800 4.800h4.400M11.200 5v4.500M9 7.200h4.400" stroke="#e6b400" stroke-width="1.500"/><circle cx="6.700" cy="11.700" r="2.800" fill="#3f8fd8" stroke="#1f5d9a" stroke-width="0.600"/><path d="M5.100 10.800c1-1.500 2.500-1 2.200 0.300s1.500 0.800 1 2.200c-1 1-3 0.500-3.200-2.500z" fill="#4fb04a"/><path d="M2.600 10.200l-1.500 1.600 1.500 1.600M10.800 10.200l1.500 1.600-1.500 1.600" fill="none" stroke="#222" stroke-width="0.800"/></svg>
<span class="t " style="left:94.5px;top:259.0px;letter-spacing:-0.280px;">External Dependencies</span>
<svg style="left:54px;top:263px" width="7" height="10" viewBox="0 0 7 10"><path d="M0.5 0.5 L5.5 5 L0.5 9.5 Z" fill="#fff" stroke="#989898" stroke-width="1"/></svg>
<svg style="left:74px;top:260.5px" width="16" height="12" viewBox="0 0 16 12"><path d="M0.500 11V1.500l1-1h4l1 1.500h8v9z" fill="url(#gFold)" stroke="#b48a2c"/><path d="M1.500 3.500h12" stroke="#fff6cf" stroke-width="1"/></svg><div class="" style="position:absolute;left:73px;top:267px;width:8px;height:8px;background:#fff;border:1px solid #222;box-sizing:border-box;"></div><svg style="left:75px;top:269px" width="4" height="4" viewBox="0 0 4 4"><path d="M0.500 3.500l3-3M1.500 0.500h2v2" fill="none" stroke="#111" stroke-width="0.900"/></svg>
<span class="t " style="left:94.5px;top:277.0px;letter-spacing:-0.327px;">Header Files</span>
<svg style="left:54px;top:281px" width="7" height="10" viewBox="0 0 7 10"><path d="M0.5 0.5 L5.5 5 L0.5 9.5 Z" fill="#fff" stroke="#989898" stroke-width="1"/></svg>
<svg style="left:74px;top:278.5px" width="16" height="12" viewBox="0 0 16 12"><path d="M0.500 11V1.500l1-1h4l1 1.500h8v9z" fill="url(#gFold)" stroke="#b48a2c"/><path d="M1.500 3.500h12" stroke="#fff6cf" stroke-width="1"/></svg>
<span class="t " style="left:94.5px;top:295.0px;letter-spacing:-0.423px;">Resource Files</span>
<svg style="left:74px;top:296.5px" width="16" height="12" viewBox="0 0 16 12"><path d="M0.500 11V1.500l1-1h4l1 1.500h8v9z" fill="url(#gFold)" stroke="#b48a2c"/><path d="M1.500 3.500h12" stroke="#fff6cf" stroke-width="1"/></svg>
<span class="t " style="left:94.5px;top:313.0px;letter-spacing:-0.408px;">Source Files</span>
<svg style="left:53px;top:319.5px" width="6" height="6" viewBox="0 0 6 6"><path d="M5.500 0.300 L5.500 5.500 L0.300 5.500 Z" fill="#3a3a3a" stroke="#262626" stroke-width="0.600"/></svg>
<svg style="left:73px;top:314px" width="16" height="12" viewBox="0 0 16 12"><path d="M0.500 11V1.500l1-1h4l1 1.500h6v2" fill="#f7e3a0" stroke="#a47a22"/><path d="M0.500 11.500L3.500 4.500h12l-3.500 7z" fill="url(#gFold2)" stroke="#8a6618"/></svg>
<span class="t " style="left:113.2px;top:331.0px;letter-spacing:0.031px;">atlantismain.c</span>
<svg style="left:92.5px;top:330.5px" width="16" height="16" viewBox="0 0 16 16"><path d="M3.500 0.500h8l3.500 3.500v10.500h-11.500z" fill="url(#gWin)" stroke="#5a6d9c" stroke-width="0.900"/><path d="M11.500 0.500v3.500h3.500" fill="#eef3fb" stroke="#5a6d9c" stroke-width="0.800"/><path d="M15 4v10.500h-11.500" fill="none" stroke="#2e4278" stroke-width="1"/></svg><span class="t " style="left:92.4px;top:329.8px;font-size:10px;color:#1848c0;font-weight:bold;text-shadow:0 0 1px #fff,0 0 1px #fff,0 0 1.5px #fff;">C</span><span class="t " style="left:99.2px;top:329.5px;font-size:7.5px;color:#1848c0;font-weight:bold;letter-spacing:-0.6px;-webkit-text-stroke:0.3px #1848c0;text-shadow:0 0 1px #fff,0 0 1px #fff;">++</span>
<span class="t " style="left:75.5px;top:349.0px;letter-spacing:0.029px;">atlantisUtil</span>
<svg style="left:35px;top:353px" width="7" height="10" viewBox="0 0 7 10"><path d="M0.5 0.5 L5.5 5 L0.5 9.5 Z" fill="#fff" stroke="#989898" stroke-width="1"/></svg>
<svg style="left:54.7px;top:348.7px" width="15" height="15" viewBox="0 0 15 15"><rect x="2.500" y="0.500" width="12" height="12" fill="#fff" stroke="#44558a" stroke-width="1"/><rect x="2" y="0" width="13" height="2.800" fill="#1f43b8"/><path d="M7 2.500v4.500M4.800 4.800h4.400M11.200 5v4.500M9 7.200h4.400" stroke="#e6b400" stroke-width="1.500"/><circle cx="6.700" cy="11.700" r="2.800" fill="#3f8fd8" stroke="#1f5d9a" stroke-width="0.600"/><path d="M5.100 10.800c1-1.500 2.500-1 2.200 0.300s1.500 0.800 1 2.200c-1 1-3 0.500-3.200-2.500z" fill="#4fb04a"/><path d="M2.600 10.200l-1.500 1.600 1.500 1.600M10.800 10.200l1.500 1.600-1.500 1.600" fill="none" stroke="#222" stroke-width="0.800"/></svg>
<span class="t " style="left:75.5px;top:367.0px;letter-spacing:-0.022px;">atmanage</span>
<svg style="left:35px;top:371px" width="7" height="10" viewBox="0 0 7 10"><path d="M0.5 0.5 L5.5 5 L0.5 9.5 Z" fill="#fff" stroke="#989898" stroke-width="1"/></svg>
<svg style="left:54.7px;top:366.7px" width="15" height="15" viewBox="0 0 15 15"><rect x="2.500" y="0.500" width="12" height="12" fill="#fff" stroke="#44558a" stroke-width="1"/><rect x="2" y="0" width="13" height="2.800" fill="#1f43b8"/><path d="M7 2.500v4.500M4.800 4.800h4.400M11.200 5v4.500M9 7.200h4.400" stroke="#e6b400" stroke-width="1.500"/><circle cx="6.700" cy="11.700" r="2.800" fill="#3f8fd8" stroke="#1f5d9a" stroke-width="0.600"/><path d="M5.100 10.800c1-1.500 2.500-1 2.200 0.300s1.500 0.800 1 2.200c-1 1-3 0.500-3.200-2.500z" fill="#4fb04a"/><path d="M2.600 10.200l-1.500 1.600 1.500 1.600M10.800 10.200l1.500 1.600-1.500 1.600" fill="none" stroke="#222" stroke-width="0.800"/></svg>
<span class="t " style="left:75.5px;top:385.0px;letter-spacing:-0.114px;">atphysics</span>
<svg style="left:35px;top:389px" width="7" height="10" viewBox="0 0 7 10"><path d="M0.5 0.5 L5.5 5 L0.5 9.5 Z" fill="#fff" stroke="#989898" stroke-width="1"/></svg>
<svg style="left:54.7px;top:384.7px" width="15" height="15" viewBox="0 0 15 15"><rect x="2.500" y="0.500" width="12" height="12" fill="#fff" stroke="#44558a" stroke-width="1"/><rect x="2" y="0" width="13" height="2.800" fill="#1f43b8"/><path d="M7 2.500v4.500M4.800 4.800h4.400M11.200 5v4.500M9 7.200h4.400" stroke="#e6b400" stroke-width="1.500"/><circle cx="6.700" cy="11.700" r="2.800" fill="#3f8fd8" stroke="#1f5d9a" stroke-width="0.600"/><path d="M5.100 10.800c1-1.500 2.500-1 2.200 0.300s1.500 0.800 1 2.200c-1 1-3 0.500-3.200-2.500z" fill="#4fb04a"/><path d="M2.600 10.200l-1.500 1.600 1.500 1.600M10.800 10.200l1.500 1.600-1.500 1.600" fill="none" stroke="#222" stroke-width="0.800"/></svg>
<span class="t " style="left:75.5px;top:403.0px;letter-spacing:-0.500px;">atSS3Link</span>
<svg style="left:35px;top:407px" width="7" height="10" viewBox="0 0 7 10"><path d="M0.5 0.5 L5.5 5 L0.5 9.5 Z" fill="#fff" stroke="#989898" stroke-width="1"/></svg>
<svg style="left:54.7px;top:402.7px" width="15" height="15" viewBox="0 0 15 15"><rect x="2.500" y="0.500" width="12" height="12" fill="#fff" stroke="#44558a" stroke-width="1"/><rect x="2" y="0" width="13" height="2.800" fill="#1f43b8"/><path d="M7 2.500v4.500M4.800 4.800h4.400M11.200 5v4.500M9 7.200h4.400" stroke="#e6b400" stroke-width="1.500"/><circle cx="6.700" cy="11.700" r="2.800" fill="#3f8fd8" stroke="#1f5d9a" stroke-width="0.600"/><path d="M5.100 10.800c1-1.500 2.500-1 2.200 0.300s1.500 0.800 1 2.200c-1 1-3 0.500-3.200-2.500z" fill="#4fb04a"/><path d="M2.600 10.200l-1.500 1.600 1.500 1.600M10.800 10.200l1.500 1.600-1.500 1.600" fill="none" stroke="#222" stroke-width="0.800"/></svg>
<span class="t " style="left:75.5px;top:421.0px;letter-spacing:0.042px;">ConvertAtlantis</span>
<svg style="left:35px;top:425px" width="7" height="10" viewBox="0 0 7 10"><path d="M0.5 0.5 L5.5 5 L0.5 9.5 Z" fill="#fff" stroke="#989898" stroke-width="1"/></svg>
<svg style="left:54.7px;top:420.7px" width="15" height="15" viewBox="0 0 15 15"><rect x="2.500" y="0.500" width="12" height="12" fill="#fff" stroke="#44558a" stroke-width="1"/><rect x="2" y="0" width="13" height="2.800" fill="#1f43b8"/><path d="M7 2.500v4.500M4.800 4.800h4.400M11.200 5v4.500M9 7.200h4.400" stroke="#e6b400" stroke-width="1.500"/><circle cx="6.700" cy="11.700" r="2.800" fill="#3f8fd8" stroke="#1f5d9a" stroke-width="0.600"/><path d="M5.100 10.800c1-1.500 2.500-1 2.200 0.300s1.500 0.800 1 2.200c-1 1-3 0.500-3.200-2.500z" fill="#4fb04a"/><path d="M2.600 10.200l-1.500 1.600 1.500 1.600M10.800 10.200l1.500 1.600-1.500 1.600" fill="none" stroke="#222" stroke-width="0.800"/></svg>
<span class="t " style="left:75.5px;top:439.0px;letter-spacing:0.077px;">sjwlib</span>
<svg style="left:35px;top:443px" width="7" height="10" viewBox="0 0 7 10"><path d="M0.5 0.5 L5.5 5 L0.5 9.5 Z" fill="#fff" stroke="#989898" stroke-width="1"/></svg>
<svg style="left:54.7px;top:438.7px" width="15" height="15" viewBox="0 0 15 15"><rect x="2.500" y="0.500" width="12" height="12" fill="#fff" stroke="#44558a" stroke-width="1"/><rect x="2" y="0" width="13" height="2.800" fill="#1f43b8"/><path d="M7 2.500v4.500M4.800 4.800h4.400M11.200 5v4.500M9 7.200h4.400" stroke="#e6b400" stroke-width="1.500"/><circle cx="6.700" cy="11.700" r="2.800" fill="#3f8fd8" stroke="#1f5d9a" stroke-width="0.600"/><path d="M5.100 10.800c1-1.500 2.500-1 2.200 0.300s1.500 0.800 1 2.200c-1 1-3 0.500-3.200-2.500z" fill="#4fb04a"/><path d="M2.600 10.200l-1.500 1.600 1.500 1.600M10.800 10.200l1.500 1.600-1.500 1.600" fill="none" stroke="#222" stroke-width="0.800"/></svg>
<div class="" style="position:absolute;left:328px;top:86px;width:92px;height:21px;background:linear-gradient(#ffffff,#f3f5f8 45%,#dde2ea 55%,#d0d7e2);border-radius:3px 3px 0 0;"></div>
<div class="" style="position:absolute;left:328px;top:106.3px;width:1117px;height:3.5px;background:#cbd2df;"></div>
<div class="" style="position:absolute;left:328px;top:109.7px;width:1117px;height:1.6px;background:#2f405f;"></div>
<span class="t " style="left:332.2px;top:89.0px;letter-spacing:0.137px;color:#000;">atNutrient.c</span>
<span class="t " style="left:425.5px;top:89.0px;letter-spacing:0.047px;color:#fff;">atlantisboxmodel.h</span>
<span class="t " style="left:557.5px;top:89.0px;letter-spacing:-0.141px;color:#fff;">atphysics.c</span>
<span class="t " style="left:646.7px;top:89.0px;letter-spacing:0.045px;color:#fff;">atlantismain.c</span>
<span class="t " style="left:751.2px;top:89.0px;letter-spacing:0.086px;color:#fff;">atvertgeom.c</span>
<span class="t " style="left:852.2px;top:89.0px;letter-spacing:0.238px;color:#fff;">atbiology.c</span>
<span class="t " style="left:942.4px;top:89.0px;letter-spacing:-0.147px;color:#fff;">atsuspension.c</span>
<span class="t " style="left:1051.5px;top:89.0px;letter-spacing:0.031px;color:#fff;">attransport.c</span>
<span class="t " style="left:1149.7px;top:89.0px;letter-spacing:-0.095px;color:#fff;">atfishstatIO.c</span>
<span class="t " style="left:1249.4px;top:89.0px;letter-spacing:-0.080px;color:#fff;">atepiIO.c</span>
<span class="t " style="left:1327.2px;top:89.0px;letter-spacing:-0.060px;color:#fff;">atdiagIO.c</span>
<svg style="left:405px;top:92px" width="10" height="10" viewBox="0 0 10 10"><path d="M1 1 L9 9 M9 1 L1 9" stroke="#6a6a6a" stroke-width="1.4" fill="none"/></svg>
<div class="" style="position:absolute;left:1444px;top:92px;width:1px;height:5px;background:#e8ecf3;"></div>
<div class="" style="position:absolute;left:329px;top:111.2px;width:1116px;height:20.3px;background:linear-gradient(#fdfdff,#f5f6fb 60%,#eceef5);"></div>
<div class="" style="position:absolute;left:328px;top:131.4px;width:1117px;height:1.7px;background:#34435f;"></div>
<div class="" style="position:absolute;left:893px;top:112px;width:1px;height:19px;background:#7c8aa3;"></div>
<div class="" style="position:absolute;left:894px;top:112px;width:1px;height:19px;background:#fff;"></div>
<span class="t " style="left:351.8px;top:114.0px;letter-spacing:-0.253px;">(Global Scope)</span>
<div class="arr" style="left:884px;top:120px"></div>
<span class="t " style="left:916.2px;top:114.0px;letter-spacing:-0.202px;">Ammonium_ROC(MSEBoxModel * bm, FILE * llogfp, HABITAT_TYPES habitatType, int index, BoxLay</span>
<svg style="left:899px;top:114px" width="14" height="13" viewBox="0 0 14 13"><path d="M0 4h3M0 6h3M1 8h2" stroke="#b8a878" stroke-width="1"/><path d="M8.5 1 L13 4 L13 8.5 L8.5 12 L4.5 8.5 L4.5 4 Z" fill="#c23fd0" stroke="#7b1f86" stroke-width="0.8"/><path d="M8.5 1 L13 4 L8.5 6.5 L4.5 4 Z" fill="#eaa6f0"/></svg>
<div class="" style="position:absolute;left:328px;top:133px;width:1117px;height:555px;background:#fff;"></div>
<div class="" style="position:absolute;left:328px;top:133px;width:17px;height:555px;background:#f0f0f0;"></div>
<div class="" style="position:absolute;left:345px;top:133px;width:1096px;height:555px;overflow:hidden;"><div class="code" style="left:21px;top:-7px">        <span class="kw">break</span>;</div><div class="code" style="left:21px;top:9px">    }</div><div class="code" style="left:21px;top:41px">    <span class="kw">if</span>(bm-&gt;include_atmosphere){</div><div class="code" style="left:21px;top:57px">        <span class="cm">/** Get NH3 values from atmosphare on the surface cell **/</span></div><div class="code" style="left:21px;top:73px">        <span class="kw">if</span> (bm-&gt;current_layer == (bm-&gt;boxes[bm-&gt;current_box].nz - 1)) {</div><div class="code" style="left:21px;top:89px">            dzz = bm-&gt;boxes[bm-&gt;current_box].dz[bm-&gt;current_layer];</div><div class="code" style="left:21px;top:105px">            <span class="kw">if</span> (dzz != 0.0) {</div><div class="code" style="left:21px;top:121px">               boxLayerInfo-&gt;localWCFlux[*PhysioChemArray[index].tracerIndex] += (bm-&gt;atmospheric_NH / dzz) / numsec;</div><div class="code" style="left:21px;top:137px">               boxLayerInfo-&gt;DebugFluxInfo[PhysioChemArray[index].debugIndex][WC][gain_id] += (bm-&gt;atmospheric_NH / dzz) / numsec;</div><div class="code" style="left:21px;top:153px">            }</div><div class="code" style="left:21px;top:169px">        }</div><div class="code" style="left:21px;top:185px">    }</div><div class="code" style="left:21px;top:201px">}</div><div class="code" style="left:21px;top:233px"><span class="cm">/**</span></div><div class="code" style="left:21px;top:249px"><span class="cm"> *  \brief The Detrital Silica tracer rate of change.</span></div><div class="code" style="left:21px;top:265px"><span class="cm"> *</span></div><div class="code" style="left:21px;top:281px"><span class="cm"> *  Det_Si</span></div><div class="code" style="left:21px;top:297px"><span class="cm"> *</span></div><div class="code" style="left:21px;top:313px"><span class="cm"> */</span></div><div class="code" style="left:21px;top:329px"><span class="kw">void</span> Detrital_Silica_ROC(MSEBoxModel *bm, FILE *llogfp, HABITAT_TYPES habitatType, BoxLayerValues *boxLayerInfo) {</div><div class="code" style="left:21px;top:361px">    <span class="kw">int</span> guild, cohort;</div><div class="code" style="left:21px;top:377px">    <span class="kw">double</span> Si_Flux, DSi;</div><div class="code" style="left:21px;top:409px">    <span class="kw">switch</span> (habitatType) {</div><div class="code" style="left:21px;top:425px">    <span class="kw">case</span> WC:</div><div class="code" style="left:21px;top:441px">        DSi = boxLayerInfo-&gt;localWCTracers[Det_Si_i];</div><div class="code" style="left:21px;top:473px">        Si_Flux = 0.0;</div><div class="code" style="left:21px;top:489px">        <span class="kw">for</span> (guild = 0; guild &lt; bm-&gt;K_num_tot_sp; guild++) {</div><div class="code" style="left:21px;top:505px">            <span class="kw">if</span> (FunctGroupArray[guild].isSiliconDep == TRUE) {</div><div class="code" style="left:21px;top:521px">                <span class="kw">for</span> (cohort = 0; cohort &lt; FunctGroupArray[guild].numCohortsXnumGenes; cohort++) {</div><div class="code" style="left:21px;top:537px">                    Si_Flux += (FunctGroupArray[guild].mortality[cohort] + FunctGroupArray[guild].lysis[cohort]</div><div class="" style="position:absolute;left:15px;top:-1px;width:1px;height:216px;background:#a5a5a5;"></div><div class="" style="position:absolute;left:15px;top:214px;width:5px;height:1px;background:#a5a5a5;"></div><div class="" style="position:absolute;left:15px;top:245px;width:1px;height:83px;background:#a5a5a5;"></div><div class="" style="position:absolute;left:15px;top:327px;width:5px;height:1px;background:#a5a5a5;"></div><div class="" style="position:absolute;left:15px;top:341px;width:1px;height:214px;background:#a5a5a5;"></div><div class="" style="position:absolute;left:10px;top:236px;width:9px;height:9px;background:#fff;border:1px solid #8a8a8a;box-sizing:border-box;"></div><div class="" style="position:absolute;left:12px;top:240px;width:5px;height:1px;background:#555;"></div><div class="" style="position:absolute;left:10px;top:332px;width:9px;height:9px;background:#fff;border:1px solid #8a8a8a;box-sizing:border-box;"></div><div class="" style="position:absolute;left:12px;top:336px;width:5px;height:1px;background:#555;"></div></div>
<div class="" style="position:absolute;left:328px;top:688px;width:1117px;height:17px;background:#efefef;"></div>
<div class="" style="position:absolute;left:328px;top:688px;width:59px;height:17px;background:#fff;"></div>
<span class="t " style="left:332.9px;top:689.0px;letter-spacing:-0.525px;">100 %</span>
<div class="arr" style="left:379px;top:696px;border-top-color:#1e2a44"></div>
<svg style="left:393px;top:692px" width="6" height="9" viewBox="0 0 6 9"><path d="M5 0.5 L0.5 4.5 L5 8.5 Z" fill="#9a9a9a"/></svg>
<svg style="left:1429px;top:692px" width="6" height="9" viewBox="0 0 6 9"><path d="M1 0.5 L5.5 4.5 L1 8.5 Z" fill="#606060"/></svg>
<div class="" style="position:absolute;left:406px;top:689px;width:786px;height:15px;background:linear-gradient(#f7f7f7,#e8e8e8 45%,#cfcfcf 50%,#dcdcdc);border:1px solid #979797;border-radius:2px;box-sizing:border-box;"></div>
<div class="" style="position:absolute;left:795px;top:693px;width:1px;height:7px;background:#555;"></div>
<div class="" style="position:absolute;left:797px;top:693px;width:1px;height:7px;background:#555;"></div>
<div class="" style="position:absolute;left:799px;top:693px;width:1px;height:7px;background:#555;"></div>
<div class="" style="position:absolute;left:328px;top:705px;width:1117px;height:4px;background:#ced5e2;"></div>
<div class="" style="position:absolute;left:1441px;top:132px;width:4px;height:573px;background:#f3f3f3;"></div>
<div class="" style="position:absolute;left:1441px;top:134px;width:4px;height:15px;background:#dfe3ea;border:1px solid #8a94a8;box-sizing:border-box;"></div>
<div class="" style="position:absolute;left:1441px;top:372px;width:4px;height:16px;background:#f6f6f6;border:1px solid #9a9a9a;border-right:none;box-sizing:border-box;"></div>
<div class="" style="position:absolute;left:626px;top:319px;width:791px;height:350px;background:#33476c;border-radius:3px 3px 0 0;"></div>
<div class="" style="position:absolute;left:630px;top:323px;width:783px;height:342px;background:#f0f0f0;"></div>
<div class="" style="position:absolute;left:630px;top:323px;width:783px;height:19px;background:linear-gradient(#fffcf2,#fff1c8 40%,#ffe8a6 60%,#ffe8a6);"></div>
<span class="t " style="left:632.6px;top:324.5px;letter-spacing:-0.241px;">Find and Replace</span>
<div class="arr" style="left:1368px;top:330px;border-width:4px 4px 0 4px;border-top-color:#75633d"></div>
<div class="" style="position:absolute;left:1384px;top:328px;width:9px;height:9px;border:1px solid #4b3f22;border-top:3px solid #4b3f22;box-sizing:border-box;"></div>
<svg style="left:1399px;top:327px" width="10" height="10" viewBox="0 0 10 10"><path d="M1 1 L9 9 M9 1 L1 9" stroke="#4b3f22" stroke-width="1.5" fill="none"/></svg>
<div class="" style="position:absolute;left:630px;top:342px;width:783px;height:26px;background:linear-gradient(#fdfdfd,#f6f6f6);"></div>
<div class="" style="position:absolute;left:630px;top:342px;width:152px;height:26px;background:#bcc7d8;border-radius:0 0 3px 0;"></div>
<div class="" style="position:absolute;left:772px;top:342px;width:10px;height:26px;background:#d3dae6;border-radius:0 3px 3px 0;"></div>
<div class="" style="position:absolute;left:775.5px;top:346px;width:1.5px;height:2px;background:#333;"></div>
<div class="" style="position:absolute;left:778.5px;top:346px;width:1.5px;height:2px;background:#333;"></div>
<div class="" style="position:absolute;left:634px;top:345px;width:94px;height:22px;background:#ffefbb;border:1px solid #e5c365;border-radius:2px;box-sizing:border-box;"></div>
<span class="t " style="left:657.7px;top:346.6px;letter-spacing:-0.065px;">Quick Find</span>
<div class="arr" style="left:718px;top:353px"></div>
<div class="" style="position:absolute;left:731px;top:347px;width:1px;height:18px;background:#8591a5;"></div>
<div class="" style="position:absolute;left:732px;top:347px;width:1px;height:18px;background:#dfe5ee;"></div>
<div class="" style="position:absolute;left:630px;top:368px;width:783px;height:1px;background:#a0a0a0;"></div>
<span class="t " style="left:638.2px;top:374.5px;letter-spacing:-0.046px;">Find what:</span>
<div class="" style="position:absolute;left:636px;top:393px;width:742px;height:23px;background:#fff;border:1px solid #b5cfe7;border-top-color:#3d7bad;border-radius:2px;box-sizing:border-box;"></div>
<div class="" style="position:absolute;left:642px;top:396px;width:108px;height:15px;background:#3399ff;"></div>
<span class="t " style="left:642.5px;top:395.5px;letter-spacing:-0.071px;color:#fff;">include<span style="position:relative;top:-1.5px">_</span>atmosphere</span>
<div class="" style="position:absolute;left:749px;top:396px;width:1px;height:15px;background:#c86400;"></div>
<div class="arr" style="left:1365px;top:402px;border-width:4px 4px 0 4px"></div>
<div class="" style="position:absolute;left:1383px;top:393px;width:21px;height:23px;background:linear-gradient(#f6f6f6,#ececec);border:1px solid #b4b4b4;border-radius:3px;box-sizing:border-box;"></div>
<svg style="left:1390px;top:399px" width="7" height="11" viewBox="0 0 7 11"><path d="M0.5 0.5 L6 5.5 L0.5 10.5 Z" fill="#9a9a9a"/></svg>
<span class="t " style="left:638.2px;top:422.0px;letter-spacing:0.084px;">Look in:</span>
<div class="" style="position:absolute;left:636px;top:441px;width:768px;height:23px;background:linear-gradient(#f2f2f2,#ebebeb 48%,#dddddd 52%,#cfcfcf);border:1px solid #707070;border-radius:3px;box-sizing:border-box;"></div>
<span class="t " style="left:640.1px;top:444.5px;letter-spacing:-0.030px;">Entire Solution</span>
<div class="arr" style="left:1391px;top:451px;border-width:4px 4px 0 4px"></div>
<div class="" style="position:absolute;left:636.5px;top:480px;width:770px;height:142px;border:1px solid #d5dfe5;border-radius:3px;box-sizing:border-box;box-shadow:inset 1px 1px 0 #fafafa;"></div>
<div class="" style="position:absolute;left:657px;top:478px;width:77px;height:6px;background:#f0f0f0;"></div>
<div class="" style="position:absolute;left:637px;top:476px;width:16px;height:16px;background:linear-gradient(#f4f4f4,#dcdcdc);border:1px solid #707070;border-radius:3px;box-sizing:border-box;"></div>
<div class="" style="position:absolute;left:641px;top:484px;width:7px;height:1.2px;background:#15158f;"></div>
<span class="t " style="left:661.3px;top:475.0px;letter-spacing:0.086px;">Find options</span>
<div class="" style="position:absolute;left:652px;top:502px;width:13px;height:13px;background:linear-gradient(135deg,#e3e3e3,#fdfdfd);border:1px solid #8e8f8f;box-shadow:inset 0 0 0 1px #f4f4f4,inset 0 0 0 2px #c2c2c2;box-sizing:border-box;"></div>
<span class="t " style="left:668.8px;top:500.8px;letter-spacing:-0.146px;">Match case</span>
<div class="" style="position:absolute;left:652px;top:525px;width:13px;height:13px;background:linear-gradient(135deg,#e3e3e3,#fdfdfd);border:1px solid #8e8f8f;box-shadow:inset 0 0 0 1px #f4f4f4,inset 0 0 0 2px #c2c2c2;box-sizing:border-box;"></div>
<span class="t " style="left:668.8px;top:523.9px;letter-spacing:0.106px;">Match whole word</span>
<div class="" style="position:absolute;left:652px;top:547px;width:13px;height:13px;background:linear-gradient(135deg,#e3e3e3,#fdfdfd);border:1px solid #8e8f8f;box-shadow:inset 0 0 0 1px #f4f4f4,inset 0 0 0 2px #c2c2c2;box-sizing:border-box;"></div>
<span class="t " style="left:668.8px;top:545.7px;letter-spacing:-0.400px;">Search up</span>
<div class="" style="position:absolute;left:652px;top:570px;width:13px;height:13px;background:linear-gradient(135deg,#e3e3e3,#fdfdfd);border:1px solid #8e8f8f;box-shadow:inset 0 0 0 1px #f4f4f4,inset 0 0 0 2px #c2c2c2;box-sizing:border-box;"></div>
<span class="t " style="left:668.8px;top:568.6px;letter-spacing:-0.843px;">Use:</span>
<div class="" style="position:absolute;left:670px;top:587px;width:723px;height:23px;background:#f4f4f4;border:1px solid #adb2b5;border-radius:2px;box-sizing:border-box;"></div>
<span class="t " style="left:674.8px;top:591.0px;letter-spacing:-0.342px;color:#6d6d6d;">Regular expressions</span>
<div class="arr" style="left:1380px;top:597px;border-width:4px 4px 0 4px;border-top-color:#a0a0a0"></div>
<div class="" style="position:absolute;left:1177px;top:630px;width:112px;height:24px;background:linear-gradient(#f3f8fb,#e3eff6 48%,#cfe0ea 52%,#c3d8e4);border:1px solid #3c7fb1;border-radius:3px;box-shadow:inset 0 0 0 1px #48d8fb;box-sizing:border-box;"></div>
<span class="t " style="left:1208.2px;top:634.0px;letter-spacing:-0.095px;">Find Next</span>
<div class="" style="position:absolute;left:1295px;top:630px;width:112px;height:24px;background:#f4f4f4;border:1px solid #adb2b5;border-radius:3px;box-sizing:border-box;"></div>
<span class="t " style="left:1315.4px;top:634.0px;letter-spacing:0.098px;color:#838383;">Bookmark All</span>
<svg style="left:293px;top:90px" width="9" height="12" viewBox="0 0 9 12"><path d="M2.500 0.500h4v5h-4zM5 0.500v5M1 6h7M4.500 6v5" fill="none" stroke="#dfe5ef" stroke-width="1.100"/></svg>
<svg style="left:309px;top:91px" width="10" height="10" viewBox="0 0 10 10"><path d="M0.700 0.700l8 8M8.700 0.700l-8 8" stroke="#e8edf5" stroke-width="1.500" fill="none"/></svg>
<svg style="left:0px;top:86px" width="16" height="22" viewBox="0 0 16 22"><path d="M-1 3.500L8 12" stroke="#e0382c" stroke-width="2.200"/><path d="M0 15.500L9.500 7" stroke="#fff" stroke-width="1.300"/><path d="M10.800 3.200a2.300 2.300 0 1 0 2.600 2.900" fill="none" stroke="#d0d7e3" stroke-width="1.400"/><path d="M8 13.500l3-1.500 2.300-3.200 0.700 0.300-0.300 3.500-2.200 3.500-2 1.200-1.200-1.300z" fill="#e4e8f0"/><circle cx="7.400" cy="19.300" r="0.800" fill="#fff"/></svg>
<svg style="left:31px;top:110px" width="16" height="16" viewBox="0 0 16 16"><path d="M0.500 11V1l1-0.500h4l1 1.500h6v9z" fill="#efe6bf" stroke="#bfb68a"/><rect x="0.500" y="0.500" width="5" height="1.500" fill="#f3c94a"/><rect x="2" y="3.500" width="10" height="1" fill="#fff"/><rect x="2" y="6" width="10" height="1" fill="#fff"/><rect x="2" y="3.500" width="1" height="1" fill="#3d5ea8"/><rect x="2" y="6" width="1" height="1" fill="#3d5ea8"/><rect x="4.500" y="8.500" width="11" height="6" fill="#f6f8fc" stroke="#3d5288" stroke-width="1.200"/><rect x="6.500" y="10" width="2" height="1.200" fill="#1c2338"/><rect x="9.500" y="10" width="5" height="1.200" fill="#6a7590"/><rect x="6.500" y="12.300" width="2" height="1.200" fill="#1c2338"/><rect x="9.500" y="12.300" width="5" height="1.200" fill="#6a7590"/></svg>
<svg style="left:60px;top:110px" width="16" height="16" viewBox="0 0 16 16"><path d="M0.500 0.500h6v10h-6z" fill="#fdfdfd" stroke="#9aa2b3" stroke-dasharray="1 1"/><path d="M6.500 2.500h5.500l3 3v7.500h-8.500z" fill="#fbeeb8" stroke="#7a6a42" stroke-width="0.900"/><path d="M2.500 6.500h5l2.500 2.500v6.500h-7.500z" fill="#fff" stroke="#3a5aa0"/><rect x="4" y="9.500" width="3" height="1" fill="#5d8be0"/><rect x="4" y="11.500" width="4.500" height="1" fill="#5d8be0"/><rect x="4" y="13.500" width="4.500" height="1" fill="#5d8be0"/></svg>
<svg style="left:90px;top:112px" width="14" height="13" viewBox="0 0 14 13"><rect x="0.700" y="0.700" width="12.600" height="11.600" fill="#fff" stroke="#5a5240" stroke-width="1.200"/><rect x="1" y="1" width="2.300" height="11" fill="#d5cdb2"/><rect x="4.500" y="2.700" width="3" height="1.200" fill="#1f3cff"/><rect x="8.500" y="2.700" width="3.500" height="1" fill="#b5b5b5"/><rect x="6.500" y="5" width="3" height="1.200" fill="#1f3cff"/><rect x="10.500" y="5" width="1.500" height="1" fill="#b5b5b5"/><rect x="6.500" y="7" width="5" height="1" fill="#b5b5b5"/><rect x="4.500" y="9" width="5" height="1.200" fill="#1f3cff"/></svg>
<svg style="left:638px;top:348px" width="16" height="16" viewBox="0 0 16 16"><path d="M1.500 0.500h7l3 3v11.500h-10z" fill="#fff" stroke="#5b6f9c"/><rect x="3" y="3" width="4" height="1" fill="#3d74dc"/><rect x="3" y="5" width="6" height="1" fill="#3d74dc"/><rect x="3" y="7" width="6" height="1" fill="#3d74dc"/><rect x="3" y="9" width="3" height="1" fill="#3d74dc"/><g fill="#26262c"><rect x="7" y="8" width="2.600" height="3.500" rx="0.800"/><rect x="11" y="8" width="2.600" height="3.500" rx="0.800"/><path d="M6 10.500h4l0.500 5h-5z"/><path d="M10.500 10.500h4l1 5h-5z"/><rect x="9" y="10" width="2.500" height="2"/></g></svg>
</div>
</body></html>
